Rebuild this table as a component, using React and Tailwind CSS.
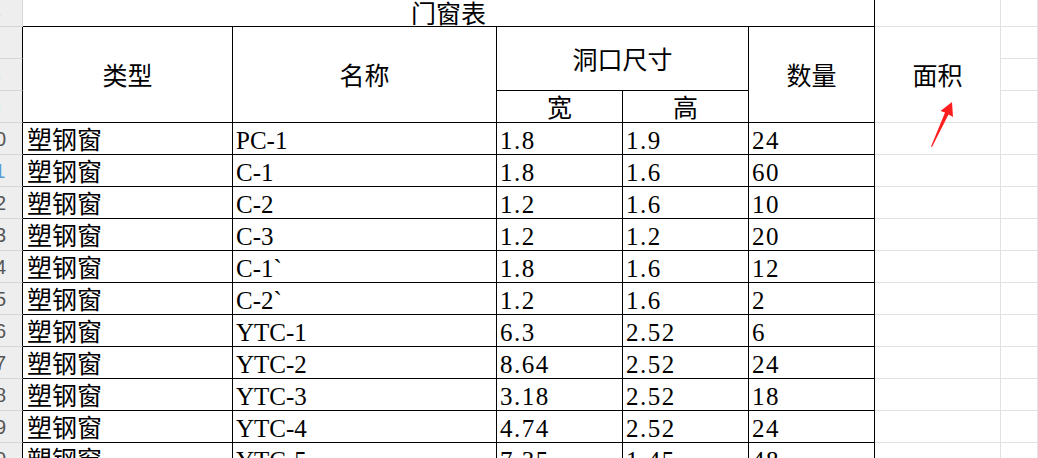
import React from 'react';

const rows = [
    ['塑钢窗', 'PC-1', '1.8', '1.9', '24'],
    ['塑钢窗', 'C-1', '1.8', '1.6', '60'],
    ['塑钢窗', 'C-2', '1.2', '1.6', '10'],
    ['塑钢窗', 'C-3', '1.2', '1.2', '20'],
    ['塑钢窗', 'C-1`', '1.8', '1.6', '12'],
    ['塑钢窗', 'C-2`', '1.2', '1.6', '2'],
    ['塑钢窗', 'YTC-1', '6.3', '2.52', '6'],
    ['塑钢窗', 'YTC-2', '8.64', '2.52', '24'],
    ['塑钢窗', 'YTC-3', '3.18', '2.52', '18'],
    ['塑钢窗', 'YTC-4', '4.74', '2.52', '24'],
    ['塑钢窗', 'YTC-5', '7.35', '1.45', '48'],
];

// row header: numbers are centred in a wider column whose left part is scrolled off
const RowHead = ({ n, edge = 'border-black', active = false }) => (
    <div className={`flex items-center overflow-hidden bg-[#eeeeee] border-b border-b-[#d6d6d6] border-r ${edge}`}>
        <div className={`w-[40px] -ml-[25px] shrink-0 text-center font-['Liberation_Sans',sans-serif] text-[20px] ${active ? 'text-[#5b9bd5]' : 'text-[#555555]'}`}>
            {n}
        </div>
    </div>
);

const gridCell = 'border-r border-b border-[#e1e1e1]';
const dataCell = 'flex items-end leading-[26px] border-r border-b border-black whitespace-nowrap overflow-hidden';
const headCell = 'flex items-center justify-center pt-[5px] leading-[26px] border-r border-b border-black';

export default function App() {
    return (
        <div className="relative w-[1038px] h-[458px] overflow-hidden bg-white text-black text-[25px] font-['Liberation_Serif','Noto_Sans_CJK_SC',serif]">
            <div className="grid grid-cols-[23px_210px_264px_126px_126px_126px_126px_1fr] grid-rows-[27px_repeat(14,32px)]">
                {/* title row */}
                <RowHead n={6} edge="border-r-[#d6d6d6]" />
                <div className="col-span-5 flex items-center justify-center pt-[3px] leading-[24px] border-r border-b border-black">门窗表</div>
                <div className={gridCell}></div>
                <div className={gridCell}></div>

                {/* header rows */}
                <RowHead n={7} />
                <div className={`row-span-3 ${headCell}`}>类型</div>
                <div className={`row-span-3 ${headCell}`}>名称</div>
                <div className={`col-span-2 row-span-2 ${headCell}`}>洞口尺寸</div>
                <div className={`row-span-3 ${headCell}`}>数量</div>
                <div className={`row-span-3 flex items-center justify-center pt-[5px] leading-[26px] ${gridCell}`}>面积</div>
                <div className={gridCell}></div>

                <RowHead n={8} />
                <div className={gridCell}></div>

                <RowHead n={9} />
                <div className={headCell}>宽</div>
                <div className={headCell}>高</div>
                <div className={gridCell}></div>

                {/* data rows */}
                {rows.map((r, i) => (
                    <React.Fragment key={i}>
                        <RowHead n={10 + i} active={i === 1} />
                        <div className={`${dataCell} pl-[4px]`}>{r[0]}</div>
                        <div className={`${dataCell} pl-[3px]`}>{r[1]}</div>
                        <div className={`${dataCell} pl-[3px] tracking-[1.5px]`}>{r[2]}</div>
                        <div className={`${dataCell} pl-[3px] tracking-[1.5px]`}>{r[3]}</div>
                        <div className={`${dataCell} pl-[3px] tracking-[1.5px]`}>{r[4]}</div>
                        <div className={gridCell}></div>
                        <div className={gridCell}></div>
                    </React.Fragment>
                ))}
            </div>

            {/* red annotation arrow */}
            <svg className="absolute left-[920px] top-[95px] w-[40px] h-[60px]" viewBox="920 95 40 60">
                <polygon
                    points="952,102 953,117 948.5,114.5 932,147 931,146.5 945,112.5 940.5,111"
                    fill="#ff1f1f"
                />
            </svg>
        </div>
    );
}
